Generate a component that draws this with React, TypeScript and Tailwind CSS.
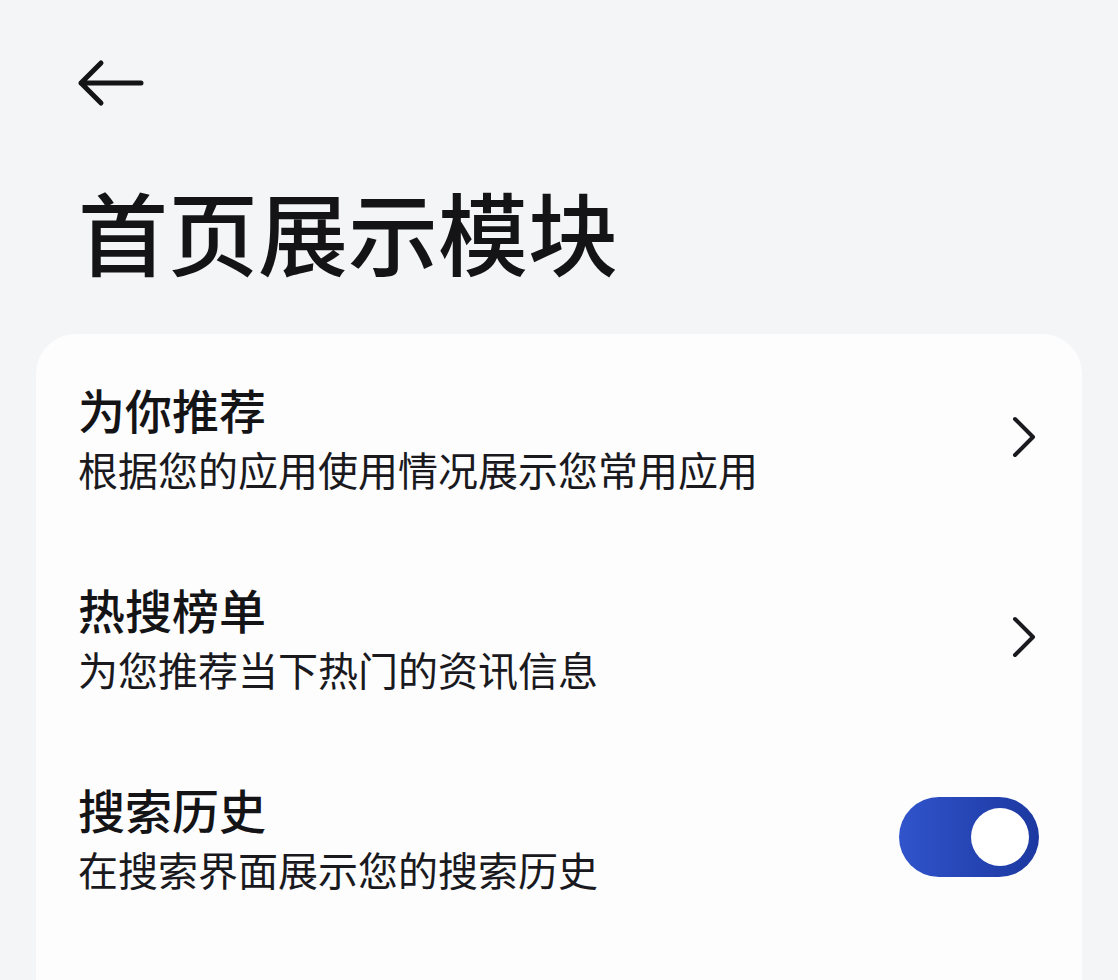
import React from 'react'

const font = "font-['Noto_Sans_CJK_SC','Noto_Sans',sans-serif]"

type Row = {
  title: string
  desc: string
  kind: 'link' | 'toggle'
}

const rows: Row[] = [
  { title: '为你推荐', desc: '根据您的应用使用情况展示您常用应用', kind: 'link' },
  { title: '热搜榜单', desc: '为您推荐当下热门的资讯信息', kind: 'link' },
  { title: '搜索历史', desc: '在搜索界面展示您的搜索历史', kind: 'toggle' },
]

const Chevron = () => (
  <svg width="30" height="42" viewBox="0 0 30 42" fill="none" aria-hidden>
    <path d="M6 3L24 21L6 39" stroke="#1b1b1f" strokeWidth="4" strokeLinecap="round" strokeLinejoin="round" />
  </svg>
)

const Toggle = ({ on }: { on: boolean }) => (
  <div className={`flex h-[80px] w-[140px] items-center rounded-full bg-gradient-to-r from-[#3154cc] to-[#1c38a0] px-[10px] ${on ? 'justify-end' : 'justify-start'}`}>
    <div className="h-[58px] w-[58px] rounded-full bg-white" />
  </div>
)

export default function App() {
  return (
    <div className={`h-[980px] w-[1118px] overflow-hidden bg-[#f4f5f7] ${font} text-[#141416]`}>
      <div className="px-[76px] pt-[59px]">
        <svg width="68" height="48" viewBox="0 0 68 48" fill="none" aria-hidden>
          <path d="M65 24H5M25 4L5 24L25 44" stroke="#141416" strokeWidth="5" strokeLinecap="round" strokeLinejoin="round" />
        </svg>
        <h1 className="ml-[2px] mt-[78px] text-[90px] font-medium leading-[90px]">首页展示模块</h1>
      </div>

      <div className="mx-[36px] mt-[59px] h-[700px] rounded-[40px] bg-[#fdfdfe] pt-[3px]">
        {rows.map((row) => (
          <div key={row.title} className="flex h-[200px] items-center justify-between pl-[42px] pr-[43px]">
            <div className="flex flex-col gap-[11px]">
              <div className="text-[47px] font-medium leading-[52px]">{row.title}</div>
              <div className="text-[40px] leading-[46px] text-[#1a1a1e]">{row.desc}</div>
            </div>
            {row.kind === 'link' ? <Chevron /> : <Toggle on />}
          </div>
        ))}
      </div>
    </div>
  )
}
